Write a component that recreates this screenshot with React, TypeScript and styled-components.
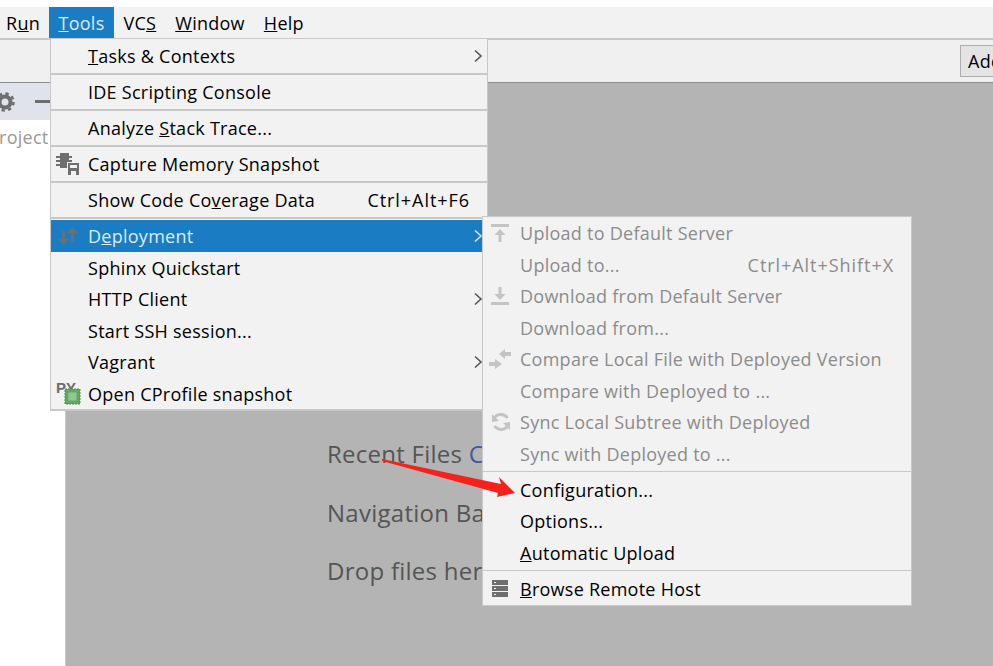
import React, { FC, ReactNode } from 'react';
import styled, { createGlobalStyle } from 'styled-components';

const GlobalStyle = createGlobalStyle`
  html, body {
    margin: 0;
    padding: 0;
    background: #fff;
    overflow: hidden;
  }
  body {
    font-family: "Open Sans", "Noto Sans", sans-serif;
    font-size: 18px;
    letter-spacing: 0.26px;
  }
`;

const ChevronIcon: FC = () => (
  <svg width="10" height="14" viewBox="0 0 10 14">
    <path d="M2 1.5 L8 7 L2 12.5" fill="none" stroke="currentColor" strokeWidth="1.6" />
  </svg>
);

const MemoryIcon: FC = () => (
  <svg width="24" height="22" viewBox="0 0 24 22">
    <g fill="#6e6e6e">
      <rect x="4" y="0" width="9" height="15" />
      <rect x="0" y="3" width="16" height="2" />
      <rect x="0" y="7" width="16" height="2" />
      <rect x="0" y="11" width="12" height="2" />
    </g>
    <rect x="11" y="9" width="13" height="13" fill="#f2f2f2" />
    <path d="M12 10 H23 V22 H12 Z" fill="#6e6e6e" />
    <rect x="14" y="12" width="7" height="3" fill="#f2f2f2" />
    <rect x="15" y="18" width="5" height="4" fill="#f2f2f2" />
  </svg>
);

const DeployIcon: FC = () => (
  <svg width="24" height="20" viewBox="0 0 24 20">
    <g fill="#6f6f6f">
      <path d="M6 5 H9 V13 H13 L7.5 19 L2 13 H6 Z" />
      <path d="M15 16 V7 H11 L16.5 1 L22 7 H18 V16 Z" />
    </g>
  </svg>
);

const PythonProfileIcon: FC = () => (
  <svg width="25" height="25" viewBox="0 0 25 25">
    <text x="0" y="12" fontFamily="Liberation Sans, sans-serif" fontWeight="700" fontSize="15" letterSpacing="0" fill="#6e6e6e">PY</text>
    <rect x="9" y="8" width="15" height="15" fill="#62a862" stroke="#4f8a4f" strokeDasharray="2 1" />
    <rect x="12.5" y="11.5" width="8" height="8" fill="#8ccb8c" />
  </svg>
);

const UploadIcon: FC = () => (
  <svg width="22" height="20" viewBox="0 0 22 20">
    <rect x="2" y="1" width="18" height="3" fill="#c4c4c4" />
    <path d="M9.5 19 V12 H5.5 L11 6 L16.5 12 H12.5 V19 Z" fill="#c4c4c4" />
  </svg>
);

const DownloadIcon: FC = () => (
  <svg width="22" height="20" viewBox="0 0 22 20">
    <rect x="2" y="16" width="18" height="3" fill="#c4c4c4" />
    <path d="M9.5 1 V8 H5.5 L11 14 L16.5 8 H12.5 V1 Z" fill="#c4c4c4" />
  </svg>
);

const CompareIcon: FC = () => (
  <svg width="22" height="20" viewBox="0 0 22 20">
    <g fill="#c4c4c4">
      <path d="M10 5 L16 0 V3 H22 V7 H16 V10 Z" />
      <path d="M0 13 H6 V10 L13 15 L6 20 V17 H0 Z" />
    </g>
  </svg>
);

const SyncIcon: FC = () => (
  <svg width="22" height="20" viewBox="0 0 22 20">
    <g fill="none" stroke="#c4c4c4" strokeWidth="3">
      <path d="M18.5 6 A8 8 0 0 0 5 6.5" />
      <path d="M5.5 14 A8 8 0 0 0 19 13.5" />
    </g>
    <path d="M3 2 L3 10 L10 9 Z" fill="#c4c4c4" />
    <path d="M21 18 L21 10 L14 11 Z" fill="#c4c4c4" />
  </svg>
);

const ServerIcon: FC = () => (
  <svg width="22" height="17" viewBox="0 0 22 17">
    <g fill="#6e6e6e">
      <rect x="3" y="0" width="16" height="5" />
      <rect x="3" y="6" width="16" height="5" />
      <rect x="3" y="12" width="16" height="5" />
    </g>
    <g fill="#f2f2f2">
      <rect x="5" y="2" width="2" height="1" />
      <rect x="5" y="8" width="2" height="1" />
      <rect x="5" y="14" width="2" height="1" />
    </g>
  </svg>
);

const GearIcon: FC = () => (
  <svg width="20" height="20" viewBox="0 0 20 20">
    <circle cx="10" cy="10" r="5.5" fill="none" stroke="#6e6e6e" strokeWidth="4" />
    <circle cx="10" cy="10" r="8.5" fill="none" stroke="#6e6e6e" strokeWidth="2.5" strokeDasharray="3.4 3.3" />
  </svg>
);

interface RowProps {
  icon?: ReactNode;
  shortcut?: string;
  submenu?: boolean;
  active?: boolean;
  disabled?: boolean;
  children: ReactNode;
}

const Row: FC<RowProps> = ({ icon, shortcut, submenu, active, disabled, children }) => (
  <RowWrap $active={active} $disabled={disabled}>
    <IconSlot>{icon}</IconSlot>
    <RowLabel>{children}</RowLabel>
    {shortcut && <Shortcut>{shortcut}</Shortcut>}
    {submenu && (
      <Arrow $active={active}>
        <ChevronIcon />
      </Arrow>
    )}
  </RowWrap>
);

export default function App() {
  return (
    <Wrapper>
      <GlobalStyle />
      <TopStrip />
      <MenuBar>
        <MenuItem>R<u>u</u>n</MenuItem>
        <MenuItem $active><u>T</u>ools</MenuItem>
        <MenuItem>VC<u>S</u></MenuItem>
        <MenuItem><u>W</u>indow</MenuItem>
        <MenuItem><u>H</u>elp</MenuItem>
      </MenuBar>
      <Toolbar>
        <AddButton>Add Configuration...</AddButton>
      </Toolbar>
      <Body>
        <ProjectPanel>
          <PanelHeader>
            <GearSlot><GearIcon /></GearSlot>
            <Dash />
          </PanelHeader>
          <ProjectLabel>Project</ProjectLabel>
        </ProjectPanel>
        <Editor>
          <Hint>Recent Files <HintKey>Ctrl+E</HintKey></Hint>
          <Hint>Navigation Bar <HintKey>Alt+Home</HintKey></Hint>
          <Hint>Drop files here to open</Hint>
        </Editor>
      </Body>

      <ToolsMenu>
        <Section><Row submenu><u>T</u>asks &amp; Contexts</Row></Section>
        <Section><Row>IDE Scripting Console</Row></Section>
        <Section><Row>Analyze <u>S</u>tack Trace...</Row></Section>
        <Section><Row icon={<MemoryIcon />}>Capture Memory Snapshot</Row></Section>
        <Section><Row shortcut="Ctrl+Alt+F6">Show Code Co<u>v</u>erage Data</Row></Section>
        <Section>
          <Row active submenu icon={<DeployIcon />}>D<u>e</u>ployment</Row>
          <Row>Sphinx Quickstart</Row>
          <Row submenu>HTTP Client</Row>
          <Row>Start SSH session...</Row>
          <Row submenu>Vagrant</Row>
          <Row icon={<PythonProfileIcon />}>Open CProfile snapshot</Row>
        </Section>
      </ToolsMenu>

      <DeployMenu>
        <Group>
          <Row disabled icon={<UploadIcon />}>Upload to Default Server</Row>
          <Row disabled shortcut="Ctrl+Alt+Shift+X">Upload to...</Row>
          <Row disabled icon={<DownloadIcon />}>Download from Default Server</Row>
          <Row disabled>Download from...</Row>
          <Row disabled icon={<CompareIcon />}>Compare Local File with Deployed Version</Row>
          <Row disabled>Compare with Deployed to ...</Row>
          <Row disabled icon={<SyncIcon />}>Sync Local Subtree with Deployed</Row>
          <Row disabled>Sync with Deployed to ...</Row>
        </Group>
        <Group>
          <Row>Configuration...</Row>
          <Row>Options...</Row>
          <Row><u>A</u>utomatic Upload</Row>
        </Group>
        <Group>
          <Row icon={<ServerIcon />}><u>B</u>rowse Remote Host</Row>
        </Group>
      </DeployMenu>

      <Callout width="140" height="45" viewBox="0 0 140 45">
        <path d="M2 1 L121 26 L119 19 L135 35 L117 39 L118 35 L2 3 Z" fill="#f5221b" />
      </Callout>
    </Wrapper>
  );
}

//---------------------------STYLES-------------------------------------------//

const Wrapper = styled.div`
  position: relative;
  width: 993px;
  height: 666px;
  overflow: hidden;
  display: flex;
  flex-direction: column;
  color: #000;
`;

const TopStrip = styled.div`
  height: 7px;
  background: #fff;
`;

const MenuBar = styled.div`
  height: 31px;
  display: flex;
  background: #f2f2f2;
  border-bottom: 2px solid #c8c8c8;
`;

const MenuItem = styled.div<{ $active?: boolean }>`
  padding: 0 9.5px;
  display: flex;
  align-items: center;
  white-space: pre;
  background: ${p => (p.$active ? '#1a7dc4' : 'transparent')};
  color: ${p => (p.$active ? '#dcecf8' : '#000')};
  &:first-child {
    padding: 0 9px 0 6px;
  }
`;

const Toolbar = styled.div`
  height: 43px;
  box-sizing: border-box;
  display: flex;
  align-items: center;
  padding-left: 960px;
  overflow: hidden;
  background: #f0f0f0;
  border-bottom: 1px solid #8c8c8c;
`;

const AddButton = styled.div`
  flex: none;
  height: 32px;
  box-sizing: border-box;
  padding: 0 7px;
  line-height: 30px;
  white-space: nowrap;
  background: #e4e4e4;
  border: 1px solid #adadad;
`;

const Body = styled.div`
  flex: 1;
  display: flex;
  min-height: 0;
`;

const ProjectPanel = styled.div`
  width: 65px;
  flex: none;
  overflow: hidden;
  background: #fff;
  border-right: 1px solid #c8c8c8;
`;

const PanelHeader = styled.div`
  height: 37px;
  display: flex;
  align-items: center;
  gap: 20px;
  background: #e0e3eb;
`;

const GearSlot = styled.div`
  margin-left: -5px;
  display: flex;
`;

const Dash = styled.div`
  width: 16px;
  height: 3px;
  background: #6e6e6e;
`;

const ProjectLabel = styled.div`
  margin: 5px 0 0 -12px;
  color: #999;
`;

const Editor = styled.div`
  flex: 1;
  display: flex;
  flex-direction: column;
  gap: 24.5px;
  padding: 354px 0 0 261px;
  background: #b4b4b4;
`;

const Hint = styled.div`
  font-size: 24px;
  line-height: 34px;
  white-space: nowrap;
  color: #555;
`;

const HintKey = styled.span`
  color: #3f5a9e;
`;

const IconSlot = styled.div`
  width: 37px;
  box-sizing: border-box;
  padding-left: 5px;
  flex: none;
  display: flex;
  align-items: center;
`;

const ToolsMenu = styled.div`
  position: absolute;
  left: 50px;
  top: 39px;
  width: 438px;
  box-sizing: border-box;
  background: #f2f2f2;
  border: solid #c8c8c8;
  border-width: 0 1px 2px 1px;
`;

const Section = styled.div`
  padding: 1.25px 0;
  border-top: 2px solid #c8c8c8;
  &:first-child {
    border-top: 0;
  }
  &:last-child {
    padding-bottom: 0;
  }
`;

const DeployMenu = styled.div`
  position: absolute;
  left: 482px;
  top: 216px;
  width: 430px;
  box-sizing: border-box;
  background: #f2f2f2;
  border: 1px solid #c8c8c8;
  ${IconSlot} {
    width: 37px;
    padding-left: 6px;
  }
`;

const Group = styled.div`
  padding: 2px 0 1.5px;
  border-top: 1px solid #c8c8c8;
  &:first-child {
    border-top: 0;
    padding-top: 0.5px;
    padding-bottom: 1.5px;
  }
  &:last-child {
    padding-bottom: 0.5px;
  }
`;

const RowWrap = styled.div<{ $active?: boolean; $disabled?: boolean }>`
  height: 31.5px;
  display: flex;
  align-items: center;
  padding-right: 17px;
  white-space: nowrap;
  position: relative;
  background: ${p => (p.$active ? '#1a7dc4' : 'transparent')};
  color: ${p => (p.$active ? '#dcecf8' : p.$disabled ? '#8c8c8c' : '#000')};
`;

const RowLabel = styled.div`
  flex: 1;
`;

const Shortcut = styled.div`
  flex: none;
  letter-spacing: 0.95px;
`;

const Arrow = styled.div<{ $active?: boolean }>`
  position: absolute;
  right: 4px;
  top: 9px;
  display: flex;
  color: ${p => (p.$active ? '#cfe4f5' : '#555')};
`;

const Callout = styled.svg`
  position: absolute;
  left: 380px;
  top: 458px;
`;
